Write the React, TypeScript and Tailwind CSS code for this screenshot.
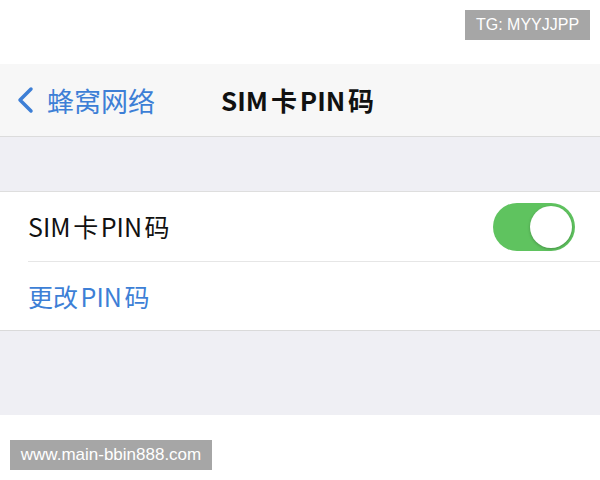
const font = { fontFamily: '"Noto Sans CJK SC", "Noto Sans", sans-serif' };
const mark = { fontFamily: '"Liberation Sans", Arial, sans-serif' };

// Toggle switch, always on
const Toggle = () => (
  <div className="w-[82px] h-[48px] rounded-full bg-[#5fc35f] flex items-center justify-end pr-[3px]">
    <div className="w-[42px] h-[42px] rounded-full bg-white shadow-[0_1px_3px_rgba(0,0,0,0.25)]" />
  </div>
);

export default function App() {
  return (
    <div className="w-[600px] h-[480px] bg-white flex flex-col" style={font}>
      {/* top watermark */}
      <div className="h-[64px] flex justify-end items-start pt-[10px] pr-[10px]">
        <div className="h-[30px] w-[125px] bg-[#a6a6a6] text-white text-[16px] flex items-center justify-center" style={mark}>
          TG: MYYJJPP
        </div>
      </div>

      {/* nav bar */}
      <div className="h-[73px] bg-[#f7f7f7] border-b border-[#dcdcdc] flex items-center pl-[16px]">
        <svg width="20" height="30" viewBox="0 0 20 30" className="mr-[11px]">
          <path d="M15 4 L4 15 L15 26" fill="none" stroke="#3d7fd6" strokeWidth="3.5" strokeLinecap="round" strokeLinejoin="round" />
        </svg>
        <span className="text-[27px] text-[#3d7fd6] leading-none">蜂窝网络</span>
        <span className="text-[26px] text-[#111] font-semibold leading-none ml-[66px] [word-spacing:-3px]">SIM 卡 PIN 码</span>
      </div>

      {/* gray gap */}
      <div className="h-[55px] bg-[#efeff4] border-b border-[#dedede]" />

      {/* settings group */}
      <div className="bg-white border-b border-[#dadada]">
        <div className="h-[69px] flex items-center justify-between pl-[28px] pr-[25px]">
          <span className="text-[25px] text-[#111] leading-none [word-spacing:-3px]">SIM 卡 PIN 码</span>
          <Toggle />
        </div>
        <div className="ml-[28px] border-t border-[#e6e6e6]" />
        <div className="h-[68px] flex items-center pl-[28px]">
          <span className="text-[25px] text-[#3d7fd6] leading-none [word-spacing:-3px]">更改 PIN 码</span>
        </div>
      </div>

      {/* gray bottom */}
      <div className="h-[84px] bg-[#efeff4]" />

      {/* bottom watermark */}
      <div className="pt-[25px] pl-[10px]">
        <div className="h-[30px] w-[202px] bg-[#a6a6a6] text-white text-[17px] flex items-center justify-center" style={mark}>
          www.main-bbin888.com
        </div>
      </div>
    </div>
  );
}
